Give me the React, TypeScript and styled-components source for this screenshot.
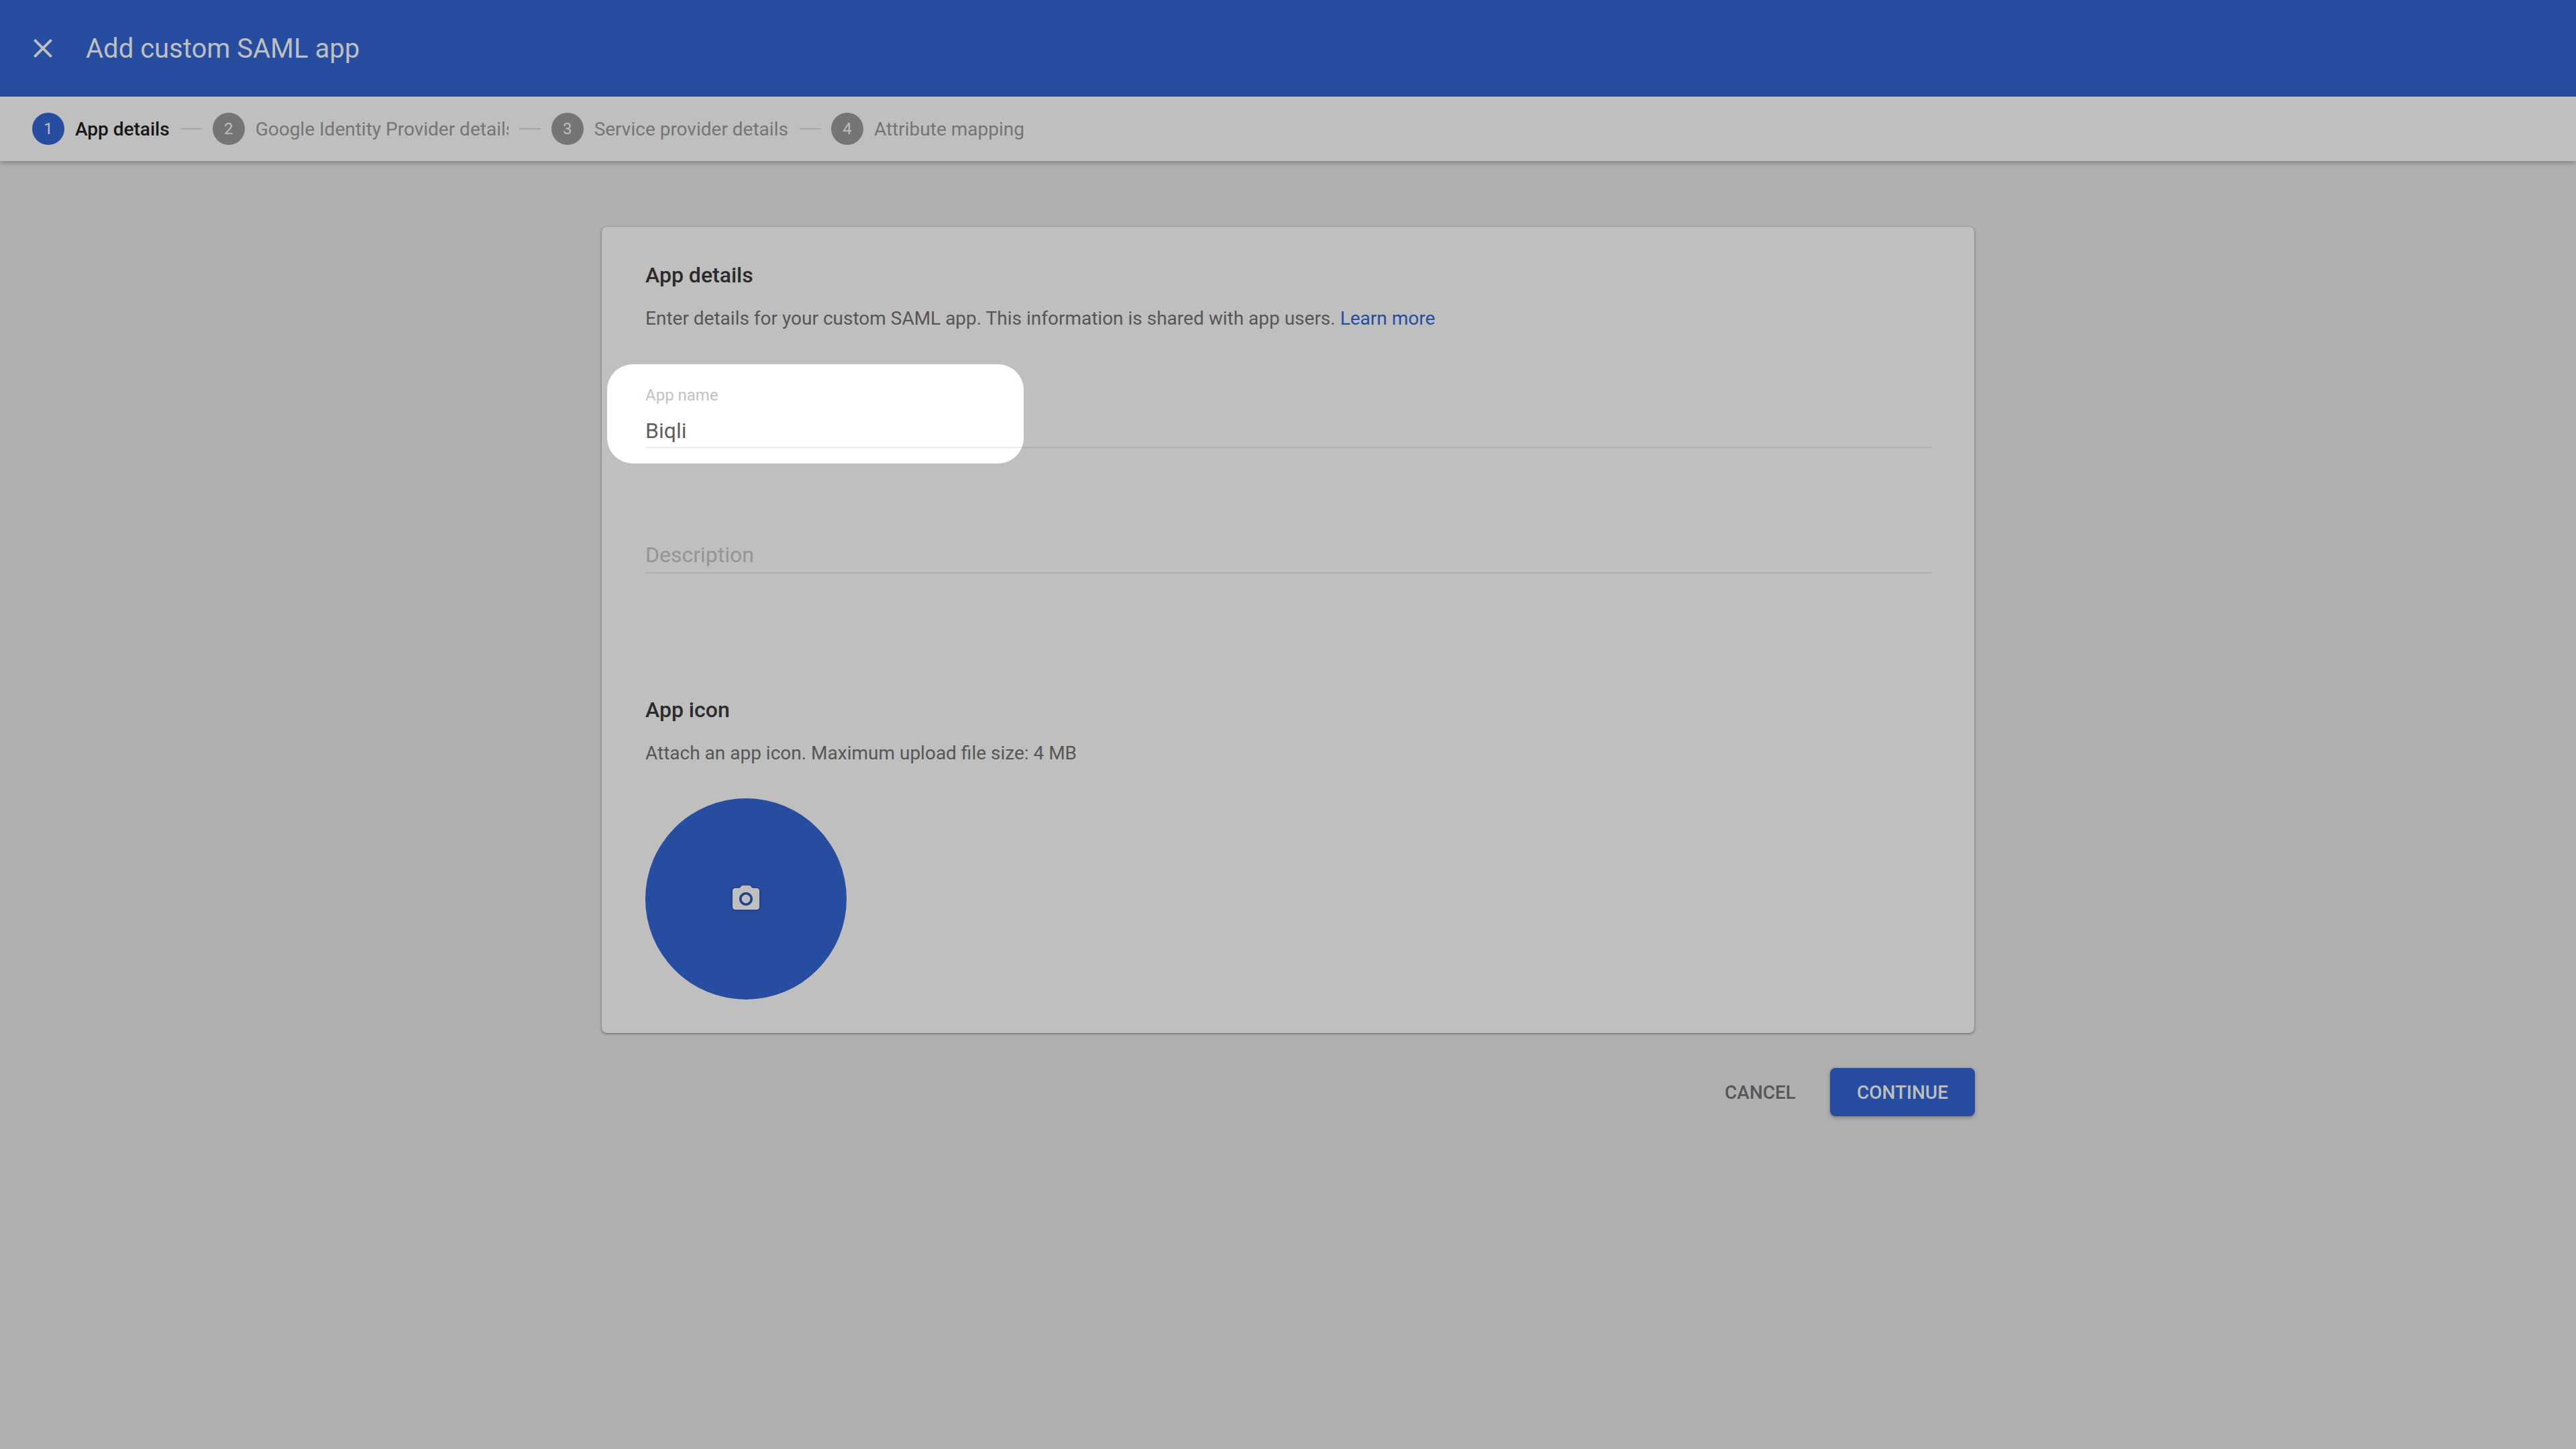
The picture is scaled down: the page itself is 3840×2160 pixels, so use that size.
import React from "react";
import styled, { createGlobalStyle } from "styled-components";

const Global = createGlobalStyle`
  html, body { margin: 0; padding: 0; }
  body { background: #b0b0b0; font-family: Roboto, "Liberation Sans", sans-serif; }
  * { box-sizing: border-box; }
`;

const Page = styled.div`
  width: 3840px;
  height: 2160px;
  display: flex;
  flex-direction: column;
  background: #b0b0b0;
  overflow: hidden;
`;

const Header = styled.header`
  height: 144px;
  flex: none;
  display: flex;
  align-items: center;
  gap: 40px;
  padding-left: 40px;
  background: #264d9f;
`;

const CloseIcon = styled.svg`
  width: 48px;
  height: 48px;
  fill: #bfbfbf;
  flex: none;
`;

const Title = styled.h1`
  margin: 2px 0 0;
  font-size: 40px;
  line-height: 48px;
  font-weight: 400;
  color: #bfbfbf;
`;

const Stepper = styled.nav`
  height: 96px;
  flex: none;
  display: flex;
  align-items: center;
  padding-left: 48px;
  background: #bfbfbf;
  box-shadow: 0 2px 8px rgba(0, 0, 0, 0.3);
  position: relative;
`;

const Step = styled.div`
  display: flex;
  align-items: center;
  gap: 16px;
`;

const StepNumber = styled.span<{ $active?: boolean }>`
  width: 48px;
  height: 48px;
  flex: none;
  border-radius: 50%;
  display: flex;
  align-items: center;
  justify-content: center;
  font-size: 24px;
  font-weight: 400;
  color: #bfbfbf;
  background: ${(p) => (p.$active ? "#264d9f" : "#757575")};
`;

const StepLabel = styled.span<{ $active?: boolean; $clip?: number }>`
  margin-top: 2px;
  font-size: 28px;
  line-height: 36px;
  font-weight: ${(p) => (p.$active ? 500 : 400)};
  color: ${(p) => (p.$active ? "#171717" : "#757575")};
  white-space: nowrap;
  overflow: hidden;
  ${(p) => (p.$clip ? `width: ${p.$clip}px;` : "")}
`;

const StepDash = styled.span`
  width: 32px;
  height: 2px;
  flex: none;
  margin: 0 16px;
  background: #a6a6a6;
`;

const Main = styled.main`
  flex: 1;
  display: flex;
  flex-direction: column;
  align-items: center;
  padding-top: 98px;
`;

const Column = styled.div`
  width: 2046px;
`;

const Card = styled.section`
  position: relative;
  height: 1202px;
  padding: 52px 63px 50px 65px;
  border-radius: 8px;
  background: #bfbfbf;
  box-shadow: 0 1px 3px rgba(0, 0, 0, 0.35), 0 1px 4px 1px rgba(0, 0, 0, 0.12);
`;

const Spotlight = styled.div`
  position: absolute;
  left: 8px;
  top: 205px;
  width: 621px;
  height: 148px;
  border-radius: 38px;
  background: #ffffff;
`;

const Content = styled.div`
  position: relative;
`;

const SectionTitle = styled.h2<{ $top?: number }>`
  margin: ${(p) => p.$top ?? 0}px 0 0;
  font-size: 32px;
  line-height: 40px;
  font-weight: 500;
  color: #2b2b2b;
`;

const SectionText = styled.p<{ $top: number }>`
  margin: ${(p) => p.$top}px 0 0;
  font-size: 28px;
  line-height: 40px;
  font-weight: 400;
  color: #565656;
`;

const LearnMore = styled.a`
  color: #264d9f;
  text-decoration: none;
`;

const Field = styled.div<{ $top: number; $gap: number }>`
  margin-top: ${(p) => p.$top}px;
  padding-bottom: ${(p) => p.$gap}px;
  border-bottom: 2px solid rgba(0, 0, 0, 0.08);
`;

const FieldLabel = styled.div`
  font-size: 24px;
  line-height: 32px;
  color: #c2c2c2;
`;

const FieldValue = styled.div<{ $placeholder?: boolean }>`
  margin-top: ${(p) => (p.$placeholder ? 0 : 17)}px;
  font-size: 32px;
  line-height: 40px;
  color: ${(p) => (p.$placeholder ? "#959595" : "#5f5f5f")};
`;

const IconUpload = styled.button`
  display: flex;
  align-items: center;
  justify-content: center;
  width: 300px;
  height: 300px;
  margin-top: 47px;
  padding: 0;
  border: 0;
  border-radius: 50%;
  background: #264d9f;
`;

const CameraIcon = styled.svg`
  width: 48px;
  height: 48px;
  fill: #bfbfbf;
  filter: drop-shadow(0 1px 3px rgba(0, 0, 0, 0.25));
`;

const Actions = styled.div`
  display: flex;
  justify-content: flex-end;
  align-items: center;
  gap: 19px;
  margin-top: 52px;
  margin-right: -1px;
`;

const BaseButton = styled.button`
  height: 72px;
  border: 0;
  border-radius: 8px;
  font-family: inherit;
  font-size: 28px;
  font-weight: 500;
  white-space: nowrap;
`;

const CancelButton = styled(BaseButton)`
  padding: 0 32px;
  background: transparent;
  color: #565656;
`;

const ContinueButton = styled(BaseButton)`
  width: 216px;
  padding: 0;
  background: #264d9f;
  color: #bfbfbf;
  box-shadow: 0 2px 6px rgba(0, 0, 0, 0.3);
`;

export default function App() {
  return (
    <Page>
      <Global />
      <Header>
        <CloseIcon viewBox="0 0 24 24">
          <path d="M19 6.41L17.59 5 12 10.59 6.41 5 5 6.41 10.59 12 5 17.59 6.41 19 12 13.41 17.59 19 19 17.59 13.41 12z" />
        </CloseIcon>
        <Title>Add custom SAML app</Title>
      </Header>
      <Stepper>
        <Step>
          <StepNumber $active>1</StepNumber>
          <StepLabel $active>App details</StepLabel>
        </Step>
        <StepDash />
        <Step>
          <StepNumber>2</StepNumber>
          <StepLabel $clip={377}>Google Identity Provider details</StepLabel>
        </Step>
        <StepDash />
        <Step>
          <StepNumber>3</StepNumber>
          <StepLabel>Service provider details</StepLabel>
        </Step>
        <StepDash />
        <Step>
          <StepNumber>4</StepNumber>
          <StepLabel>Attribute mapping</StepLabel>
        </Step>
      </Stepper>
      <Main>
        <Column>
          <Card>
            <Spotlight />
            <Content>
              <SectionTitle>App details</SectionTitle>
              <SectionText $top={25}>
                Enter details for your custom SAML app. This information is shared with app users.{" "}
                <LearnMore href="#">Learn more</LearnMore>
              </SectionText>
              <Field $top={78} $gap={4}>
                <FieldLabel>App name</FieldLabel>
                <FieldValue>Biqli</FieldValue>
              </Field>
              <Field $top={139} $gap={6}>
                <FieldValue $placeholder>Description</FieldValue>
              </Field>
              <SectionTitle $top={183}>App icon</SectionTitle>
              <SectionText $top={25}>Attach an app icon. Maximum upload file size: 4 MB</SectionText>
              <IconUpload aria-label="Upload app icon">
                <CameraIcon viewBox="0 0 24 24">
                  <circle cx="12" cy="12" r="3.2" />
                  <path d="M9 2L7.17 4H4c-1.1 0-2 .9-2 2v12c0 1.1.9 2 2 2h16c1.1 0 2-.9 2-2V6c0-1.1-.9-2-2-2h-3.17L15 2H9zm3 15c-2.76 0-5-2.24-5-5s2.24-5 5-5 5 2.24 5 5-2.24 5-5 5z" />
                </CameraIcon>
              </IconUpload>
            </Content>
          </Card>
          <Actions>
            <CancelButton>CANCEL</CancelButton>
            <ContinueButton>CONTINUE</ContinueButton>
          </Actions>
        </Column>
      </Main>
    </Page>
  );
}
